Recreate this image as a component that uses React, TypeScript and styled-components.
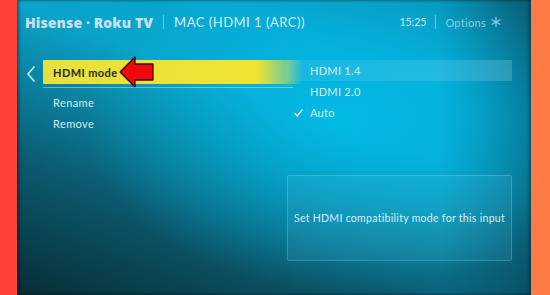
import React from "react";
import styled, { createGlobalStyle } from "styled-components";

const Global = createGlobalStyle`
  html, body { margin: 0; padding: 0; }
  body { width: 550px; height: 295px; overflow: hidden; font-family: Lato, "Open Sans", sans-serif; }
`;

const Frame = styled.div`
  display: flex;
  width: 550px;
  height: 295px;
`;

const Edge = styled.div<{ $color: string; $w: number }>`
  width: ${(p) => p.$w}px;
  flex: none;
  background: ${(p) => p.$color};
`;

const Screen = styled.div`
  flex: 1;
  position: relative;
  display: flex;
  flex-direction: column;
  overflow: hidden;
  background:
    radial-gradient(ellipse 260px 170px at 330px 120px, rgba(0, 190, 235, 0.85), rgba(0, 190, 235, 0) 100%),
    linear-gradient(90deg, rgba(0,0,0,0) 82%, rgba(8, 50, 64, 0.55) 100%),
    linear-gradient(20deg, #082d35 0%, #0b5a6f 28%, #0aa3c9 60%, #07a6cf 75%, #0a88a8 100%);
  box-shadow: inset 2px 0 3px rgba(0,0,0,0.4), inset -2px 0 3px rgba(0,0,0,0.3);
`;

const Header = styled.div`
  display: flex;
  align-items: center;
  height: 44px;
  padding: 0 30px 0 8px;
  color: #cfeaf4;
`;

const Brand = styled.div`
  font-family: "Open Sans", sans-serif;
  font-weight: 800;
  font-size: 14px;
  letter-spacing: 0.1px;
  color: #c9e0ec;
`;

const Sep = styled.span<{ $m?: number }>`
  width: 1px;
  height: 14px;
  background: rgba(200, 235, 245, 0.5);
  margin: 0 ${(p) => p.$m ?? 10}px;
`;

const Title = styled.div`
  font-size: 13px;
  letter-spacing: 0.5px;
  color: #d6eef6;
  flex: 1;
`;

const Clock = styled.div`
  font-size: 10.5px;
  color: #cfeaf4;
`;

const Options = styled.div`
  font-size: 11px;
  letter-spacing: 0.3px;
  color: #86cfe4;
  display: flex;
  align-items: center;
  gap: 5px;
`;

const Body = styled.div`
  display: grid;
  grid-template-columns: 18px 244px 225px;
  padding: 16px 0 0 8px;
  flex: 1;
`;

const Back = styled.div`
  padding-top: 6px;
  padding-left: 1px;
`;

const Menu = styled.div`
  display: flex;
  flex-direction: column;
`;

const Selected = styled.div`
  position: relative;
  height: 24px;
  margin-right: -16px;
  display: flex;
  align-items: center;
  padding-left: 10px;
  background: linear-gradient(90deg, #e8df3e 0%, #efe431 82%, rgba(225, 225, 80, 0.5) 94%, rgba(200, 220, 120, 0) 100%);
  color: #2a2a10;
  font-size: 11px;
  font-weight: 700;
  letter-spacing: 0.4px;
  border-radius: 1px;
  &::after {
    content: "";
    position: absolute;
    left: 0;
    right: 10px;
    bottom: -4px;
    height: 1px;
    background: rgba(190, 230, 240, 0.5);
  }
`;

const Item = styled.div`
  height: 21px;
  display: flex;
  align-items: center;
  padding-left: 10px;
  color: #d2ecf4;
  font-size: 11px;
  letter-spacing: 0.4px;
`;

const Spacer = styled.div`
  height: 8px;
`;

const ArrowWrap = styled.svg`
  position: absolute;
  left: 76px;
  top: -4px;
`;

const Right = styled.div`
  display: flex;
  flex-direction: column;
`;

const Option = styled.div<{ $hl?: boolean }>`
  height: 21px;
  display: flex;
  align-items: center;
  padding-left: 7px;
  color: #d8eff6;
  font-size: 11px;
  letter-spacing: 0.3px;
  background: ${(p) => (p.$hl ? "linear-gradient(90deg, rgba(120,210,240,0.15), rgba(150,220,245,0.25))" : "transparent")};
`;

const Check = styled.span`
  width: 16px;
  display: inline-flex;
  justify-content: flex-start;
`;

const Info = styled.div`
  margin-top: 52px;
  height: 84px;
  border: 1px solid rgba(160, 220, 240, 0.28);
  border-radius: 2px;
  background: rgba(120, 210, 240, 0.1);
  display: flex;
  align-items: center;
  justify-content: center;
  color: #d6eef6;
  font-size: 10.5px;
  letter-spacing: 0.3px;
`;

export default function App() {
  return (
    <>
      <Global />
      <Frame>
        <Edge $color="#ff4237" $w={17} />
        <Screen>
          <Header>
            <Brand>Hisense · Roku TV</Brand>
            <Sep $m={10} />
            <Title>MAC (HDMI 1 (ARC))</Title>
            <Clock>15:25</Clock>
            <Sep $m={9} />
            <Options>
              Options
              <svg width="10" height="10" viewBox="0 0 10 10" stroke="#86cfe4" strokeWidth="1.2" strokeLinecap="round">
                <line x1="5" y1="0.5" x2="5" y2="9.5" />
                <line x1="1" y1="2.8" x2="9" y2="7.2" />
                <line x1="1" y1="7.2" x2="9" y2="2.8" />
              </svg>
            </Options>
          </Header>
          <Body>
            <Back>
              <svg width="10" height="16" viewBox="0 0 10 16" fill="none" stroke="#bfe6f2" strokeWidth="1.8" strokeLinecap="round" strokeLinejoin="round">
                <polyline points="8,1 2,8 8,15" />
              </svg>
            </Back>
            <Menu>
              <Selected>
                HDMI mode
                <ArrowWrap width="36" height="32" viewBox="0 0 36 32">
                  <polygon points="1,16 16,1 16,8 34,8 34,24 16,24 16,31" fill="#ee0a0a" stroke="#3a0a0a" strokeWidth="1.3" strokeLinejoin="round" />
                </ArrowWrap>
              </Selected>
              <Spacer />
              <Item>Rename</Item>
              <Item>Remove</Item>
            </Menu>
            <Right>
              <Option $hl>
                <Check />
                HDMI 1.4
              </Option>
              <Option>
                <Check />
                HDMI 2.0
              </Option>
              <Option>
                <Check>
                  <svg width="9" height="8" viewBox="0 0 9 8" fill="none" stroke="#d8eff6" strokeWidth="1.4" strokeLinecap="round" strokeLinejoin="round">
                    <polyline points="1,4.5 3.3,7 8,1" />
                  </svg>
                </Check>
                Auto
              </Option>
              <Info>Set HDMI compatibility mode for this input</Info>
            </Right>
          </Body>
        </Screen>
        <Edge $color="#ff7a45" $w={19} />
      </Frame>
    </>
  );
}
